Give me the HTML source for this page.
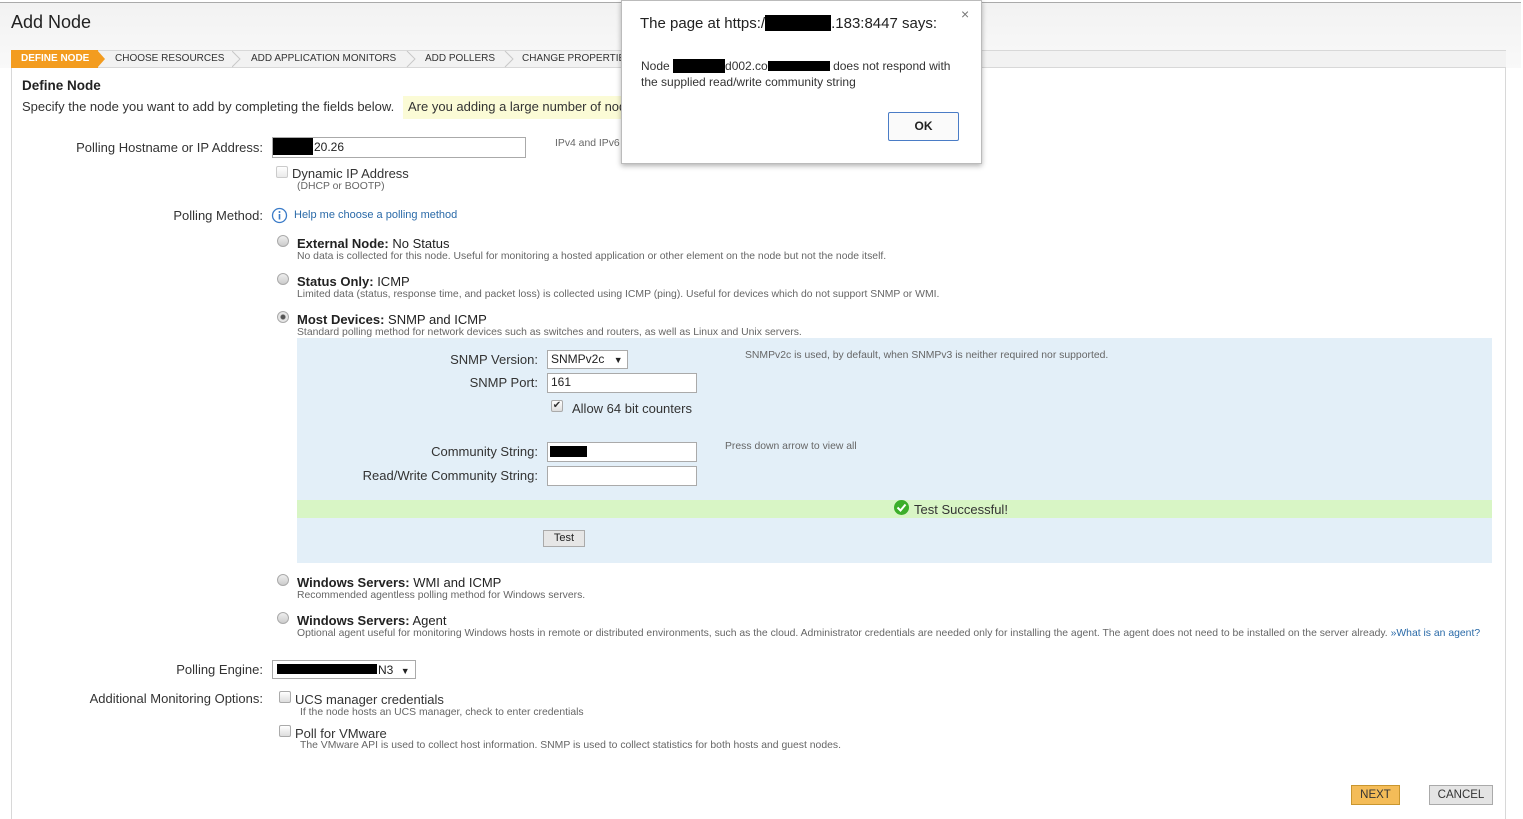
<!DOCTYPE html>
<html><head><meta charset="utf-8">
<style>
*{margin:0;padding:0;box-sizing:border-box}
body{width:1523px;height:819px;position:relative;background:#fff;font-family:"Liberation Sans",Arial,sans-serif;color:#222;overflow:hidden}
.a{position:absolute;white-space:nowrap}
.lbl{font-size:13px;color:#333;text-align:right}
.sm{font-size:10.4px;color:#666}
.inp{position:absolute;background:#fff;border:1px solid #aaa;font-size:12px;padding:1px 3px}
.blk{position:absolute;background:#000}
.radio{position:absolute;width:12px;height:12px;border-radius:50%;border:1px solid #aaa;background:linear-gradient(#eee,#ccc)}
.cb{position:absolute;width:12px;height:12px;border:1px solid #aaa;border-radius:2px;background:linear-gradient(#fff,#ddd)}
</style></head><body>
<div class="a" style="left:0;top:2px;width:1521px;height:66px;background:linear-gradient(#f2f2f2,#f9f9f9);border-top:1px solid #aaa"></div>
<div class="a" style="left:11px;top:12px;font-size:18px;color:#222">Add Node</div>
<div class="a" style="left:11px;top:50px;width:1495px;height:18px;background:#f2f2f2;border-top:1px solid #d8d8d8;border-bottom:1px solid #d8d8d8"></div>
<div class="a" style="left:11px;top:50px;width:87px;height:18px;background:#f39c1f"></div>
<svg class="a" style="left:97px;top:50px" width="10" height="18"><polygon points="0,0 8,9 0,18" fill="#f39c1f"/></svg>
<div class="a" style="left:21px;top:53px;font-size:10px;color:#fff;font-weight:bold">DEFINE NODE</div>
<div class="a" style="left:115px;top:53px;font-size:10px;color:#333">CHOOSE RESOURCES</div>
<div class="a" style="left:251px;top:53px;font-size:10px;color:#333">ADD APPLICATION MONITORS</div>
<div class="a" style="left:425px;top:53px;font-size:10px;color:#333">ADD POLLERS</div>
<div class="a" style="left:522px;top:53px;font-size:10px;color:#333">CHANGE PROPERTIES</div>
<svg class="a" style="left:232px;top:50px" width="420" height="18" fill="none" stroke="#c8c8c8"><polyline points="0,1 8,9 0,17"/><polyline points="175,1 183,9 175,17"/><polyline points="273,1 281,9 273,17"/></svg>
<div class="a" style="left:11px;top:68px;width:1495px;height:751px;border-left:1px solid #d8d8d8;border-right:1px solid #d8d8d8"></div>
<div class="a" style="left:22px;top:78px;font-size:13.5px;font-weight:bold">Define Node</div>
<div class="a" style="left:22px;top:99px;font-size:13px;color:#333">Specify the node you want to add by completing the fields below.</div>
<div class="a" style="left:403px;top:96px;width:220px;height:23px;background:#fbfbd6"></div>
<div class="a" style="left:408px;top:99px;font-size:13px;color:#333">Are you adding a large number of nodes?</div>

<div class="a lbl" style="left:0;width:263px;top:140px">Polling Hostname or IP Address:</div>
<div class="inp" style="left:272px;top:137px;width:254px;height:21px"></div>
<div class="blk" style="left:273px;top:138px;width:40px;height:17px"></div>
<div class="a" style="left:314px;top:140px;font-size:12px">20.26</div>
<div class="a sm" style="left:555px;top:138px">IPv4 and IPv6</div>
<div class="cb" style="left:276px;top:166px;opacity:.6"></div>
<div class="a" style="left:292px;top:166px;font-size:13px;color:#333">Dynamic IP Address</div>
<div class="a sm" style="left:297px;top:181px">(DHCP or BOOTP)</div>

<div class="a lbl" style="left:0;width:263px;top:208px">Polling Method:</div>
<svg class="a" style="left:271px;top:207px" width="17" height="17"><circle cx="8.5" cy="8.5" r="7" fill="#fff" stroke="#3a7bc8" stroke-width="1.3"/><circle cx="8.5" cy="5" r="1" fill="#3a7bc8"/><rect x="7.7" y="7" width="1.6" height="5.5" fill="#3a7bc8"/></svg>
<div class="a" style="left:294px;top:209px;font-size:11px;color:#2a6aa8">Help me choose a polling method</div>

<div class="radio" style="left:277px;top:235px"></div>
<div class="a" style="left:297px;top:236px;font-size:13px"><b>External Node:</b> No Status</div>
<div class="a sm" style="left:297px;top:251px">No data is collected for this node. Useful for monitoring a hosted application or other element on the node but not the node itself.</div>
<div class="radio" style="left:277px;top:273px"></div>
<div class="a" style="left:297px;top:274px;font-size:13px"><b>Status Only:</b> ICMP</div>
<div class="a sm" style="left:297px;top:289px">Limited data (status, response time, and packet loss) is collected using ICMP (ping). Useful for devices which do not support SNMP or WMI.</div>
<div class="radio" style="left:277px;top:311px;background:radial-gradient(circle,#555 0,#555 2px,#e6e6e6 3px)"></div>
<div class="a" style="left:297px;top:312px;font-size:13px"><b>Most Devices:</b> SNMP and ICMP</div>
<div class="a sm" style="left:297px;top:327px">Standard polling method for network devices such as switches and routers, as well as Linux and Unix servers.</div>

<div class="a" style="left:297px;top:338px;width:1195px;height:225px;background:#e3eff8"></div>
<div class="a lbl" style="left:300px;width:238px;top:352px">SNMP Version:</div>
<div class="inp" style="left:547px;top:350px;width:81px;height:19px;font-size:12px">SNMPv2c <span style="font-size:9px;margin-left:6px">▼</span></div>
<div class="a sm" style="left:745px;top:350px">SNMPv2c is used, by default, when SNMPv3 is neither required nor supported.</div>
<div class="a lbl" style="left:300px;width:238px;top:375px">SNMP Port:</div>
<div class="inp" style="left:547px;top:373px;width:150px;height:20px">161</div>
<div class="cb" style="left:551px;top:400px;font-size:10px;line-height:9px;text-align:center;color:#333">✔</div>
<div class="a" style="left:572px;top:401px;font-size:13px;color:#333">Allow 64 bit counters</div>
<div class="a lbl" style="left:300px;width:238px;top:444px">Community String:</div>
<div class="inp" style="left:547px;top:442px;width:150px;height:20px"></div>
<div class="blk" style="left:550px;top:446px;width:37px;height:11px"></div>
<div class="a sm" style="left:725px;top:441px">Press down arrow to view all</div>
<div class="a lbl" style="left:300px;width:238px;top:468px">Read/Write Community String:</div>
<div class="inp" style="left:547px;top:466px;width:150px;height:20px"></div>
<div class="a" style="left:297px;top:500px;width:1195px;height:18px;background:#d8f5c5"></div>
<svg class="a" style="left:893px;top:499px" width="17" height="17"><circle cx="8.5" cy="8.5" r="7.5" fill="#3cae2a"/><polyline points="4.5,8.5 7.5,11.5 12.5,5.5" fill="none" stroke="#fff" stroke-width="2"/></svg>
<div class="a" style="left:914px;top:502px;font-size:13px;color:#333">Test Successful!</div>
<div class="a" style="left:543px;top:530px;width:42px;height:17px;background:#e6e6e6;border:1px solid #aaa;font-size:11px;text-align:center;line-height:15px">Test</div>

<div class="radio" style="left:277px;top:574px"></div>
<div class="a" style="left:297px;top:575px;font-size:13px"><b>Windows Servers:</b> WMI and ICMP</div>
<div class="a sm" style="left:297px;top:590px">Recommended agentless polling method for Windows servers.</div>
<div class="radio" style="left:277px;top:612px"></div>
<div class="a" style="left:297px;top:613px;font-size:13px"><b>Windows Servers:</b> Agent</div>
<div class="a sm" style="left:297px;top:628px">Optional agent useful for monitoring Windows hosts in remote or distributed environments, such as the cloud. Administrator credentials are needed only for installing the agent. The agent does not need to be installed on the server already. <span style="color:#2a6aa8">»What is an agent?</span></div>

<div class="a lbl" style="left:0;width:263px;top:662px">Polling Engine:</div>
<div class="inp" style="left:272px;top:660px;width:144px;height:19px"></div>
<div class="blk" style="left:277px;top:664px;width:100px;height:10px"></div>
<div class="a" style="left:378px;top:663px;font-size:12px">N3 <span style="font-size:9px;margin-left:4px">▼</span></div>
<div class="a lbl" style="left:0;width:263px;top:691px">Additional Monitoring Options:</div>
<div class="cb" style="left:279px;top:691px"></div>
<div class="a" style="left:295px;top:692px;font-size:13px;color:#333">UCS manager credentials</div>
<div class="a sm" style="left:300px;top:707px">If the node hosts an UCS manager, check to enter credentials</div>
<div class="cb" style="left:279px;top:725px"></div>
<div class="a" style="left:295px;top:726px;font-size:13px;color:#333">Poll for VMware</div>
<div class="a sm" style="left:300px;top:740px">The VMware API is used to collect host information. SNMP is used to collect statistics for both hosts and guest nodes.</div>

<div class="a" style="left:1351px;top:785px;width:49px;height:20px;background:#f4bc58;border:1px solid #c9962f;font-size:11.5px;text-align:center;line-height:18px;color:#333">NEXT</div>
<div class="a" style="left:1429px;top:785px;width:64px;height:20px;background:#e4e4e4;border:1px solid #aaa;font-size:11.5px;text-align:center;line-height:18px;color:#333">CANCEL</div>

<div class="a" style="left:621px;top:0;width:361px;height:164px;background:#fff;border:1px solid #bbb;box-shadow:0 2px 5px rgba(0,0,0,.3)"></div>
<div class="a" style="left:640px;top:15px;font-size:15px;color:#222">The page at https:/<span style="display:inline-block;width:66px;height:16px;background:#000;vertical-align:-3px"></span>.183:8447 says:</div>
<div class="a" style="left:961px;top:6px;font-size:14px;color:#777">×</div>
<div class="a" style="left:641px;top:58px;font-size:12px;color:#333;line-height:16px">Node <span style="display:inline-block;width:52px;height:14px;background:#000;vertical-align:-3px"></span>d002.co<span style="display:inline-block;width:62px;height:10px;background:#000;vertical-align:-1px"></span> does not respond with<br>the supplied read/write community string</div>
<div class="a" style="left:888px;top:112px;width:71px;height:29px;border:1px solid #4a7cc6;border-radius:2px;background:#fafafa;font-size:12px;font-weight:bold;text-align:center;line-height:27px">OK</div>
</body></html>
